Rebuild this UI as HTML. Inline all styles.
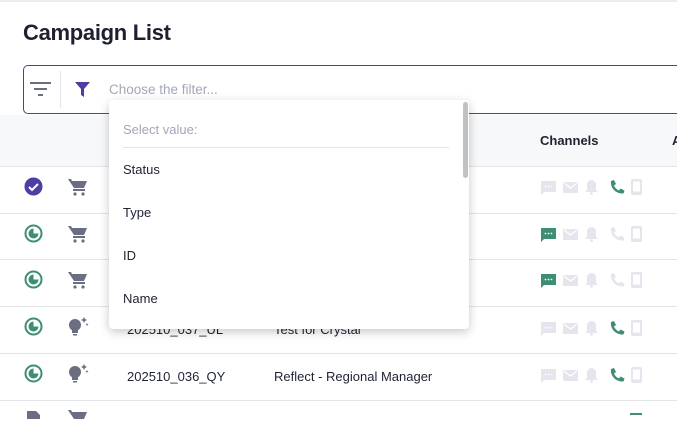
<!DOCTYPE html><html><head><style>
body{margin:0;width:677px;height:417px;overflow:hidden;background:#fff;font-family:"Liberation Sans",sans-serif;position:relative}
.a{position:absolute}
.row{position:absolute;left:0;width:677px;height:46px;border-top:1px solid #e3e4ea}
.t{font-size:13px;color:#1f2233}
</style></head><body>
<div class="a" style="left:0;top:0;width:677px;height:2px;background:#ececee"></div>
<div class="a" style="left:23px;top:20px;font-size:22px;font-weight:bold;color:#1e2030;letter-spacing:-0.3px">Campaign List</div>
<div class="a" style="left:23px;top:65px;width:680px;height:49px;border:1px solid #4b3fa6;border-radius:5px;box-sizing:border-box"></div>
<svg class="a" style="left:30px;top:80px" width="22" height="18"><rect x="0" y="2" width="21" height="2" fill="#6b6e80"/><rect x="4" y="8" width="13" height="2" fill="#6b6e80"/><rect x="8" y="14" width="5" height="2" fill="#6b6e80"/></svg>
<div class="a" style="left:60px;top:71px;width:1px;height:37px;background:#e4e4ea"></div>
<svg class="a" style="left:74px;top:81px" width="18" height="18"><path d="M1 1h15l-6 7v8l-3-2V8z" fill="#4b3fa6"/></svg>
<div class="a" style="left:109px;top:82px;font-size:13.5px;color:#a3a6b8">Choose the filter...</div>
<div class="a" style="left:0;top:115px;width:677px;height:51px;background:#f7f8fa"></div>
<div class="a" style="left:540px;top:133px;font-size:13px;font-weight:bold;color:#1f2233">Channels</div>
<div class="a" style="left:672px;top:133px;font-size:13px;font-weight:bold;color:#1f2233">A</div>
<div class="row" style="top:166px"></div><div class="row" style="top:213px"></div><div class="row" style="top:259px"></div><div class="row" style="top:306px"></div><div class="row" style="top:353px"></div><div class="row" style="top:400px"></div>
<svg width="0" height="0" style="position:absolute"><defs>
<g id="clk"><circle cx="9.5" cy="9.5" r="8" fill="none" stroke="#3e8e72" stroke-width="2"/><path d="M9.5 4.5A5 5 0 1 0 14.5 9.5L9.5 9.5z" fill="#3e8e72"/></g>
<g id="cart"><path d="M0 1h3l1 2h15l-3 7H6z"/><rect x="5" y="11" width="12" height="2"/><circle cx="7" cy="16" r="1.6"/><circle cx="15" cy="16" r="1.6"/></g>
<g id="bulb"><circle cx="9" cy="9" r="6"/><rect x="6" y="14" width="6" height="3"/><rect x="7" y="18" width="4" height="1.5"/><path d="M18 1l1 2 2 1-2 1-1 2-1-2-2-1 2-1zM21 7l.5 1 1 .5-1 .5-.5 1-.5-1-1-.5 1-.5z"/></g>
<g id="msg"><path d="M0 0h15v11H3l-3 3z"/><circle cx="4.5" cy="5.5" r=".9" fill="#fff"/><circle cx="7.5" cy="5.5" r=".9" fill="#fff"/><circle cx="10.5" cy="5.5" r=".9" fill="#fff"/></g>
<g id="env"><rect x="0" y="0" width="15" height="11" rx="1"/><path d="M1 1l6.5 5 6.5-5" stroke="#fff" stroke-width="1.3" fill="none"/></g>
<g id="bell"><path d="M6.5 0a4.5 4.5 0 0 1 4.5 4.5v5.5l2 2H0l2-2V4.5A4.5 4.5 0 0 1 6.5 0z"/><circle cx="6.5" cy="13.5" r="1.4"/></g>
<g id="ph"><path d="M1 1l3-1 2 4-2 1.5a9 9 0 0 0 5 5L10.5 8.5l4 2-1 3C6 14 0 8 1 1z"/></g>
<g id="mob"><rect x="0" y="0" width="11" height="16" rx="2"/><rect x="2" y="2.5" width="7" height="10" fill="#fff"/></g>
</defs></svg>
<svg class="a" style="left:24px;top:177px" width="19" height="19"><circle cx="9.5" cy="9.5" r="9" fill="#4b3fa6"/><path d="M5 10l3 3 6-6" stroke="#fff" stroke-width="2" fill="none"/></svg>
<svg class="a" style="left:24px;top:224px" width="19" height="19"><use href="#clk"/></svg>
<svg class="a" style="left:24px;top:270px" width="19" height="19"><use href="#clk"/></svg>
<svg class="a" style="left:24px;top:317px" width="19" height="19"><use href="#clk"/></svg>
<svg class="a" style="left:24px;top:364px" width="19" height="19"><use href="#clk"/></svg>
<svg class="a" style="left:26px;top:409px" width="16" height="10"><path d="M1 2h9l4 4v6H1z" fill="#6b6e80"/></svg>
<svg class="a" style="left:68px;top:178px" width="20" height="18" fill="#6b6e80"><use href="#cart"/></svg>
<svg class="a" style="left:68px;top:225px" width="20" height="18" fill="#6b6e80"><use href="#cart"/></svg>
<svg class="a" style="left:68px;top:271px" width="20" height="18" fill="#6b6e80"><use href="#cart"/></svg>
<svg class="a" style="left:68px;top:409px" width="20" height="10" fill="#6b6e80"><use href="#cart"/></svg>
<svg class="a" style="left:66px;top:316px" width="24" height="22" fill="#6b6e80"><use href="#bulb"/></svg>
<svg class="a" style="left:66px;top:363px" width="24" height="22" fill="#6b6e80"><use href="#bulb"/></svg>
<div class="a t" style="left:127px;top:369px">202510_036_QY</div>
<div class="a t" style="left:274px;top:369px">Reflect - Regional Manager</div>
<div class="a t" style="left:127px;top:322px">202510_037_UL</div>
<div class="a t" style="left:274px;top:322px">Test for Crystal</div>
<svg class="a" style="left:540px;top:175px" width="110" height="240">
<g fill="#e4e5ed">
<use href="#msg" x="1" y="6"/><use href="#env" x="23" y="7"/><use href="#bell" x="45" y="5"/><use href="#mob" x="91" y="4"/>
<use href="#env" x="23" y="54"/><use href="#bell" x="45" y="52"/><use href="#ph" x="70" y="52"/><use href="#mob" x="91" y="51"/>
<use href="#env" x="23" y="100"/><use href="#bell" x="45" y="98"/><use href="#ph" x="70" y="98"/><use href="#mob" x="91" y="97"/>
<use href="#msg" x="1" y="147"/><use href="#env" x="23" y="148"/><use href="#bell" x="45" y="146"/><use href="#mob" x="91" y="145"/>
<use href="#msg" x="1" y="194"/><use href="#env" x="23" y="195"/><use href="#bell" x="45" y="193"/><use href="#mob" x="91" y="192"/>
</g>
<g fill="#3e8e72">
<use href="#ph" x="70" y="5"/><use href="#msg" x="1" y="53"/><use href="#msg" x="1" y="99"/><use href="#ph" x="70" y="146"/><use href="#ph" x="70" y="193"/>
<rect x="90" y="238" width="12" height="4"/>
</g>
</svg>
<div class="a" style="left:109px;top:100px;width:360px;height:229px;background:#fff;border-radius:4px;box-shadow:0 3px 10px rgba(0,0,0,.22)">
<div class="a" style="left:14px;top:22px;font-size:13px;color:#a3a6b8">Select value:</div>
<div class="a" style="left:14px;top:47px;width:326px;height:1px;background:#e4e4ea"></div>
<div class="a t" style="left:14px;top:62px">Status</div>
<div class="a t" style="left:14px;top:105px">Type</div>
<div class="a t" style="left:14px;top:148px">ID</div>
<div class="a t" style="left:14px;top:191px">Name</div>
<div class="a" style="left:354px;top:2px;width:5px;height:76px;background:#c1c1c1;border-radius:3px"></div>
</div>
</body></html>
